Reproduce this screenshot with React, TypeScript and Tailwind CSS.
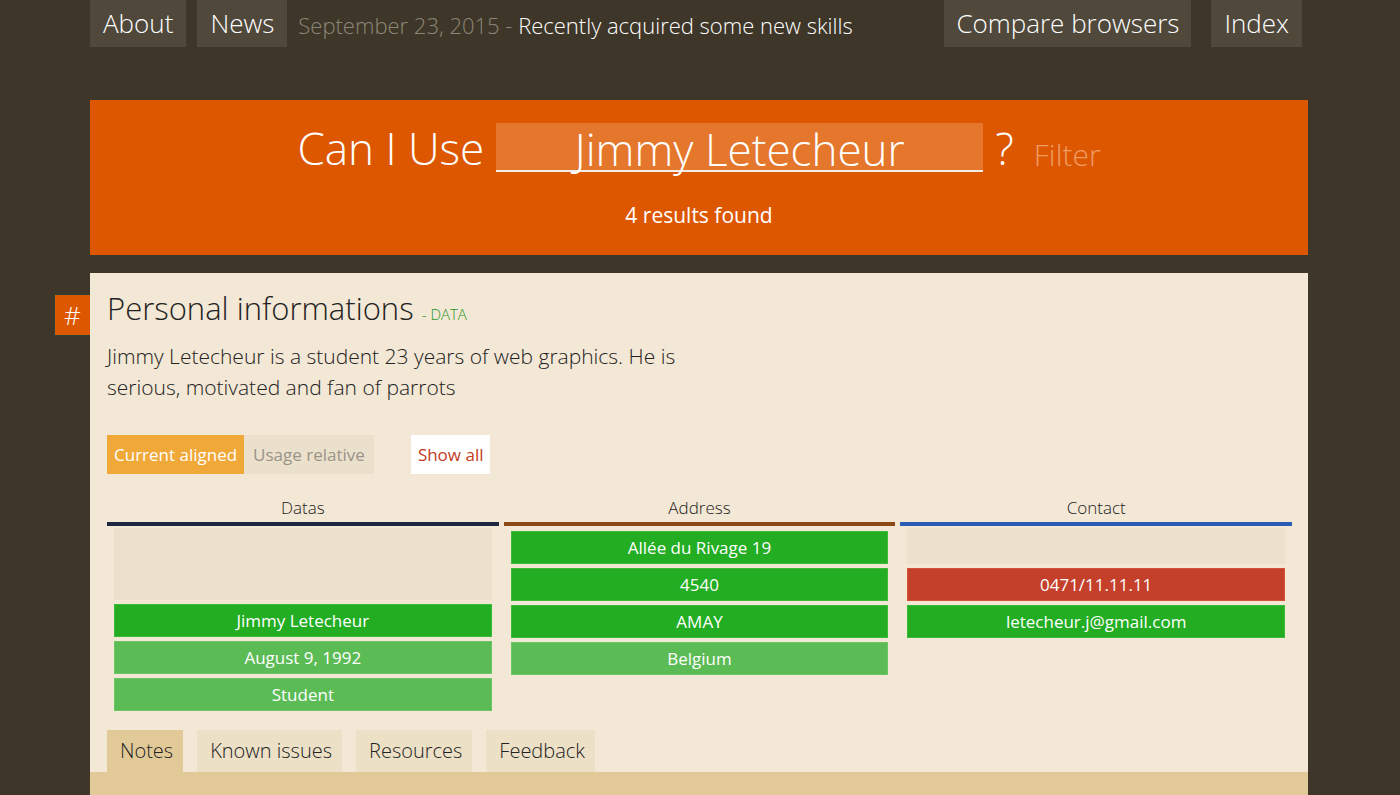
import React from "react";

type Cell = { label?: string; tone: "empty" | "green" | "light" | "red"; h?: string; first?: boolean };

const columns: { title: string; bar: string; cells: Cell[] }[] = [
  {
    title: "Datas",
    bar: "bg-[#1d2840]",
    cells: [
      { tone: "empty", h: "h-[72px]" },
      { label: "Jimmy Letecheur", tone: "green" },
      { label: "August 9, 1992", tone: "light" },
      { label: "Student", tone: "light" },
    ],
  },
  {
    title: "Address",
    bar: "bg-[#8e4a14]",
    cells: [
      { label: "Allée du Rivage 19", tone: "green", first: true },
      { label: "4540", tone: "green" },
      { label: "AMAY", tone: "green" },
      { label: "Belgium", tone: "light" },
    ],
  },
  {
    title: "Contact",
    bar: "bg-[#2b5cb5]",
    cells: [
      { tone: "empty", h: "h-[36px]" },
      { label: "0471/11.11.11", tone: "red" },
      { label: "letecheur.j@gmail.com", tone: "green" },
    ],
  },
];

const toneClass: Record<Cell["tone"], string> = {
  empty: "bg-[#ebe1cc]",
  green: "bg-[#22ad22] border border-[#3cba3c] text-white",
  light: "bg-[#5bbb55] border border-[#6cc666] text-white",
  red: "bg-[#c5402a] border border-[#d4513a] text-white",
};

const tabs = ["Notes", "Known issues", "Resources", "Feedback"];

export default function App() {
  return (
    <div className="min-h-[795px] bg-[#3e3729] font-['Open_Sans',sans-serif] overflow-hidden">
      <div className="w-[1218px] ml-[90px]">
        {/* top nav */}
        <div className="flex items-start justify-between h-[47px] text-white">
          <div className="flex items-center gap-[11px]">
            <a className="h-[47px] px-[13px] flex items-center bg-[#4f483b] text-[26px] font-light">About</a>
            <a className="h-[47px] px-[13px] flex items-center bg-[#4f483b] text-[26px] font-light">News</a>
            <span className="pt-[4px] text-[22px] font-light">
              <span className="text-[#8d8677]">September 23, 2015 - </span>
              <span>Recently acquired some new skills</span>
            </span>
          </div>
          <div className="flex gap-[20px] mr-[6px]">
            <a className="h-[47px] px-[12px] flex items-center bg-[#4f483b] text-[26px] font-light">Compare browsers</a>
            <a className="h-[47px] px-[13px] flex items-center bg-[#4f483b] text-[26px] font-light">Index</a>
          </div>
        </div>

        {/* search header */}
        <div className="mt-[53px] h-[155px] bg-[#dd5600] flex flex-col items-center text-white">
          <div className="flex items-center mt-[23px] h-[49px]">
            <span className="text-[44px] font-light mr-[12px]">Can I Use</span>
            <div className="w-[487px] h-[49px] bg-[#e4772b] border-b-2 border-[#f4ece6] flex items-center justify-center text-[44px] font-light leading-none pt-[4px]">
              Jimmy Letecheur
            </div>
            <span className="text-[44px] font-light ml-[12px]">?</span>
            <span className="text-[30px] font-light ml-[20px] mt-[14px] text-[#f09c64]">Filter</span>
          </div>
          <div className="mt-[28px] text-[21px]">4 results found</div>
        </div>

        {/* feature card */}
        <div className="mt-[18px] bg-[#f3e7d5] relative pt-[15px]">
          <div className="absolute left-[-36px] top-[21px] w-[36px] h-[42px] bg-[#dd5600] border border-[#2b4436] border-r-0 flex items-center justify-center text-white text-[26px] font-light">
            #
          </div>
          <div className="px-[17px]">
            <h2 className="text-[31px] font-light text-[#222] leading-[40px]">
              Personal informations <span className="text-[15px] text-[#1e961e] font-light">- DATA</span>
            </h2>
            <p className="mt-[7px] w-[640px] text-[21px] font-light text-[#222] leading-[31px]">
              Jimmy Letecheur is a student 23 years of web graphics. He is serious, motivated and fan of parrots
            </p>
            <div className="mt-[32px] flex items-center">
              <span className="h-[39px] px-[7px] flex items-center bg-[#f0a838] text-white text-[17px]">Current aligned</span>
              <span className="h-[39px] px-[9px] flex items-center bg-[#ebe0cb] text-[#9a9489] text-[17px]">Usage relative</span>
              <span className="ml-[37px] h-[39px] px-[7px] flex items-center bg-white text-[#c43a1d] text-[17px]">Show all</span>
            </div>

            <div className="mt-[21px] grid grid-cols-3 gap-[5px] w-[1185px]">
              {columns.map((col) => (
                <div key={col.title}>
                  <div className="text-center text-[17px] font-light text-[#222] leading-[26px]">{col.title}</div>
                  <div className={`h-[4px] mt-[1px] ${col.bar}`} />
                  <div className="px-[7px] pt-[2px] flex flex-col gap-[4px]">
                    {col.cells.map((c, i) => (
                      <div
                        key={i}
                        className={`${c.h ?? "h-[33px]"} ${c.first ? "mt-[3px]" : ""} flex items-center justify-center text-[17px] ${toneClass[c.tone]}`}
                      >
                        {c.label}
                      </div>
                    ))}
                  </div>
                </div>
              ))}
            </div>

            <div className="mt-[19px] flex gap-[14px] items-end">
              {tabs.map((t, i) => (
                <span
                  key={t}
                  className={`h-[42px] pl-[13px] pr-[10px] flex items-center text-[20px] font-light text-[#222] ${
                    i === 0 ? "bg-[#e2ca98]" : "bg-[#ece0c6]"
                  }`}
                >
                  {t}
                </span>
              ))}
            </div>
          </div>
          <div className="h-[40px] bg-[#e2ca98]" />
        </div>
      </div>
    </div>
  );
}
